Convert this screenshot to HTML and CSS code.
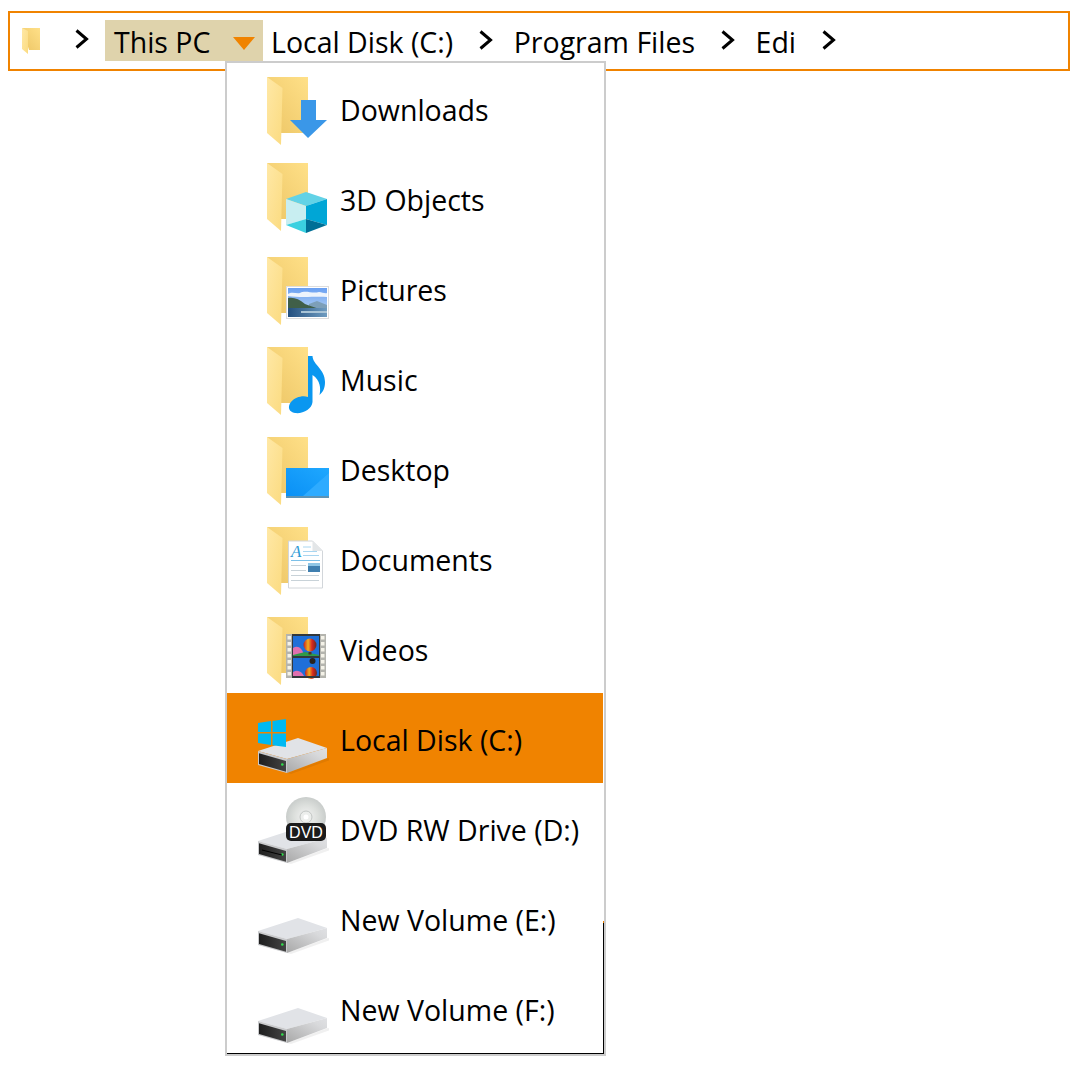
FILE: index.html
```html
<!DOCTYPE html>
<html lang="en">
<head>
  <meta charset="UTF-8">
  <meta name="viewport" content="width=device-width, initial-scale=1.0">
  <title>Address bar</title>
  <link rel="stylesheet" href="styles.css">
</head>
<body>
  <svg class="defs" width="0" height="0" aria-hidden="true">
    <defs>
      <linearGradient id="folderBack" x1="0" y1="1" x2="1" y2="0">
        <stop offset="0" stop-color="#ecc565"/>
        <stop offset="1" stop-color="#ffe088"/>
      </linearGradient>
      <linearGradient id="folderFlap" x1="0" y1="0" x2="1" y2="1">
        <stop offset="0" stop-color="#ffe8a6"/>
        <stop offset="1" stop-color="#fbdb80"/>
      </linearGradient>
      <linearGradient id="driveSide" x1="0" y1="1" x2="1" y2="0">
        <stop offset="0" stop-color="#a8a8a8"/>
        <stop offset="0.75" stop-color="#d8d9db"/>
        <stop offset="1" stop-color="#e0e1e4"/>
      </linearGradient>
      <linearGradient id="driveFace" x1="0" y1="0" x2="1" y2="0">
        <stop offset="0" stop-color="#1e1e1e"/>
        <stop offset="1" stop-color="#444444"/>
      </linearGradient>
      <linearGradient id="sky" x1="0" y1="0" x2="0" y2="1">
        <stop offset="0" stop-color="#6aa0f2"/>
        <stop offset="1" stop-color="#c4dcf2"/>
      </linearGradient>
      <linearGradient id="water" x1="0" y1="0" x2="1" y2="0">
        <stop offset="0" stop-color="#24507f"/>
        <stop offset="1" stop-color="#6f9cc0"/>
      </linearGradient>
      <linearGradient id="desk" x1="0" y1="1" x2="1" y2="0">
        <stop offset="0" stop-color="#0a90f5"/>
        <stop offset="1" stop-color="#1fa8ff"/>
      </linearGradient>
      <radialGradient id="disc">
        <stop offset="0" stop-color="#f4f4f4"/>
        <stop offset="0.6" stop-color="#dcdfdc"/>
        <stop offset="1" stop-color="#c9cdcb"/>
      </radialGradient>
      <linearGradient id="balloon" x1="0" y1="0" x2="1" y2="0">
        <stop offset="0" stop-color="#c81e1e"/>
        <stop offset="0.35" stop-color="#f0b020"/>
        <stop offset="0.65" stop-color="#d8281e"/>
        <stop offset="1" stop-color="#6a2a20"/>
      </linearGradient>

      <symbol id="folder" viewBox="0 0 72 72">
        <path d="M10 0H51V56H24Z" fill="url(#folderBack)"/>
        <path d="M10 0L25.5 11L24 68L10 56Z" fill="url(#folderFlap)"/>
      </symbol>

      <symbol id="folderSmall" viewBox="0 0 18 26">
        <path d="M0 0H18V22H7Z" fill="url(#folderBack)"/>
        <path d="M0 0L6 3L6 26L0 21Z" fill="url(#folderFlap)"/>
      </symbol>

      <symbol id="drive" viewBox="0 0 72 72">
        <path d="M30 66L71 51L76 52L34 67Z" fill="#000" opacity="0.06"/>
        <path d="M1 44L41 31L70 41L30 52Z" fill="#e1e3e7"/>
        <path d="M1 44L30 52V66L1 58Z" fill="#c9cacc"/>
        <path d="M30 52L70 41V51L30 66Z" fill="url(#driveSide)"/>
        <path d="M2 46.3L29 54V64.7L2 57Z" fill="url(#driveFace)"/>
        <circle cx="25.3" cy="57.5" r="1.3" fill="#2fe04a"/>
      </symbol>
    </defs>
  </svg>

  <nav class="address-bar">
    <svg class="root-folder" width="18" height="26"><use href="#folderSmall"/></svg>
    <svg class="chevron chevron-root" width="14" height="20" viewBox="0 0 14 20"><path d="M1.5 1.5L11.5 10L1.5 18.5" /></svg>
    <div class="crumb-active">
      <span class="crumb-label">This PC</span>
      <span class="triangle"></span>
    </div>
    <span class="crumb crumb-disk">Local Disk (C:)</span>
    <svg class="chevron" width="14" height="20" viewBox="0 0 14 20"><path d="M1.5 1.5L11.5 10L1.5 18.5" /></svg>
    <span class="crumb">Program Files</span>
    <svg class="chevron" width="14" height="20" viewBox="0 0 14 20"><path d="M1.5 1.5L11.5 10L1.5 18.5" /></svg>
    <span class="crumb">Edi</span>
    <svg class="chevron" width="14" height="20" viewBox="0 0 14 20"><path d="M1.5 1.5L11.5 10L1.5 18.5" /></svg>
  </nav>

  <ul class="menu">
    <li class="menu-item">
      <svg class="item-icon" viewBox="0 0 72 72">
        <use href="#folder"/>
        <path d="M44 23H59V43H70L51 61L33 43H44Z" fill="#3a97e8"/>
      </svg>
      <span>Downloads</span>
    </li>
    <li class="menu-item">
      <svg class="item-icon" viewBox="0 0 72 72">
        <use href="#folder" y="-4"/>
        <path d="M29 32L49 25L70 32L49 39Z" fill="#62d2e6"/>
        <path d="M29 32L49 39V52L29 58Z" fill="#c8eef1"/>
        <path d="M70 32L49 39V52L70 58Z" fill="#00a6d6"/>
        <path d="M29 58L49 52V66Z" fill="#3ad0e0"/>
        <path d="M70 58L49 52V66Z" fill="#006f96"/>
      </svg>
      <span>3D Objects</span>
    </li>
    <li class="menu-item">
      <svg class="item-icon" viewBox="0 0 72 72">
        <use href="#folder"/>
        <rect x="29.5" y="29.5" width="42" height="32" fill="#ffffff" stroke="#dddddd"/>
        <rect x="31" y="31" width="39" height="29" fill="url(#sky)"/>
        <path d="M31 37C35 34 39 37 43 36C49 33 55 37 62 35C65 35 68 37 70 36V40C60 39 45 41 31 39Z" fill="#eef4fc"/>
        <path d="M52 47L60 44L70 48V52H52Z" fill="#7d9fb8"/>
        <path d="M31 41C37 40 42 42 48 47C52 49 58 50 62 52H31Z" fill="#405f49"/>
        <rect x="31" y="51" width="39" height="9" fill="url(#water)"/>
        <rect x="44" y="54" width="26" height="2" fill="#a9c4d6"/>
      </svg>
      <span>Pictures</span>
    </li>
    <li class="menu-item">
      <svg class="item-icon" viewBox="0 0 72 72">
        <use href="#folder"/>
        <path d="M51 9H55.5C56 18 68 22 68 35C68 41 66 45 62.5 48C64 42 63.5 33 55.5 28V55C55 62 46 67 38 66C32 65 30 60 34 55C38 50 46 48 51 50Z" fill="#0a97f0"/>
      </svg>
      <span>Music</span>
    </li>
    <li class="menu-item">
      <svg class="item-icon" viewBox="0 0 72 72">
        <use href="#folder"/>
        <rect x="29" y="31" width="43" height="30" fill="#5d93b5"/>
        <rect x="29" y="31" width="43" height="28" fill="url(#desk)"/>
        <path d="M46 59L72 36V59Z" fill="#2eabff"/>
      </svg>
      <span>Desktop</span>
    </li>
    <li class="menu-item">
      <svg class="item-icon" viewBox="0 0 72 72">
        <use href="#folder"/>
        <path d="M31.5 14H55.5L65.5 24V61H31.5Z" fill="#ffffff" stroke="#d2d6da"/>
        <path d="M55.5 14V24H65.5Z" fill="#e3e6e8"/>
        <text class="doc-letter" x="34" y="30">A</text>
        <path d="M46 20H54M46 24.5H60M46 28.5H62" stroke="#a9d6f0" fill="none"/>
        <path d="M34 33.5H63" stroke="#7cc0e8" fill="none"/>
        <path d="M34 38.5H49M34 43.5H49M34 48.5H62M34 53.5H62" stroke="#c8d2d8" fill="none"/>
        <rect x="51" y="36" width="12" height="9" fill="#3f7fb0"/>
        <rect x="51" y="36" width="12" height="3" fill="#8fc6e6"/>
      </svg>
      <span>Documents</span>
    </li>
    <li class="menu-item">
      <svg class="item-icon" viewBox="0 0 72 72">
        <use href="#folder"/>
        <rect x="29" y="17" width="40" height="44" fill="#b4b4ae"/>
        <path d="M30.5 19h3.5v3.500h-3.500zM30.500 25h3.500v3.500h-3.500zM30.500 31h3.500v3.500h-3.500zM30.500 37h3.500v3.500h-3.500zM30.500 43h3.500v3.500h-3.500zM30.500 49h3.500v3.500h-3.500zM30.500 55h3.500v3.500h-3.500zM64 19h3.500v3.500h-3.500zM64 25h3.500v3.500h-3.500zM64 31h3.500v3.500h-3.500zM64 37h3.500v3.500h-3.500zM64 43h3.500v3.500h-3.500zM64 49h3.500v3.500h-3.500zM64 55h3.500v3.500h-3.500z" fill="#f4f2e8"/>
        <rect x="35" y="17" width="28" height="44" fill="#33383c"/>
        <rect x="36" y="19" width="26" height="20" fill="#1f6fd8"/>
        <rect x="36" y="41" width="26" height="18" fill="#1f6fd8"/>
        <path d="M36 38V31C41 28 45 31 47 38Z" fill="#e070b0"/>
        <path d="M36 38L48 35L62 38V39H36Z" fill="#2f9a48"/>
        <path d="M36 59V55C41 52 45 55 47 59Z" fill="#e070b0"/>
        <circle cx="53" cy="28" r="6.500" fill="url(#balloon)"/>
        <rect x="51.500" y="35" width="3" height="2.500" fill="#4a3020"/>
        <circle cx="55.500" cy="44" r="3" fill="#2a2420"/>
        <circle cx="54" cy="56" r="6" fill="url(#balloon)"/>
        <rect x="36" y="59" width="26" height="2" fill="#33383c"/>
      </svg>
      <span>Videos</span>
    </li>
    <li class="menu-item is-selected">
      <svg class="item-icon" viewBox="0 0 72 72">
        <use href="#drive"/>
        <path d="M1 16L14 14V25H1ZM15.500 14L29 12V25H15.500ZM1 26.500H14V38L1 36ZM15.500 26.500H29V40L15.500 38.200Z" fill="#00b9f2"/>
      </svg>
      <span>Local Disk (C:)</span>
    </li>
    <li class="menu-item">
      <svg class="item-icon" viewBox="0 0 72 72">
        <circle cx="49" cy="20" r="20" fill="url(#disc)"/>
        <circle cx="49" cy="20" r="6" fill="#eceeec" stroke="#c2c6c4"/>
        <circle cx="49" cy="20" r="2.500" fill="#ffffff"/>
        <use href="#drive"/>
        <path d="M5 53L25 58" stroke="#000000" fill="none"/>
        <rect x="29" y="26" width="40" height="18" rx="5" fill="#1b1b1b"/>
        <text class="dvd-label" x="49" y="41">DVD</text>
      </svg>
      <span>DVD RW Drive (D:)</span>
    </li>
    <li class="menu-item">
      <svg class="item-icon" viewBox="0 0 72 72"><use href="#drive"/></svg>
      <span>New Volume (E:)</span>
    </li>
    <li class="menu-item">
      <svg class="item-icon" viewBox="0 0 72 72"><use href="#drive"/></svg>
      <span>New Volume (F:)</span>
    </li>
  </ul>
</body>
</html>
```

FILE: styles.css
```css
body {
  margin: 11px 6px 0 8px;
  background: #fff;
  color: #000;
  font-family: "Open Sans", "Noto Sans", Arial, sans-serif;
  font-size: 28.5px;
}
.defs {
  position: absolute;
}
.address-bar {
  display: flex;
  align-items: flex-start;
  height: 60px;
  box-sizing: border-box;
  padding: 7px 0 0 12px;
  border: 2px solid #f08300;
}
.root-folder {
  margin-top: 8px;
}
.chevron {
  margin: 10px 21px 0 25.5px;
  fill: none;
  stroke: #000;
  stroke-width: 3;
}
.chevron-root {
  margin: 9px 16px 0 35px;
}
.crumb-active {
  display: flex;
  justify-content: space-between;
  width: 158px;
  height: 41px;
  box-sizing: border-box;
  padding: 0 8px 0 9px;
  background: #dfd3ac;
}
.crumb-label,
.crumb {
  line-height: 45px;
  white-space: nowrap;
}
.crumb-disk {
  margin-left: 8px;
}
.triangle {
  width: 0;
  height: 0;
  margin-top: 17px;
  border-top: 13px solid #f08300;
  border-left: 11px solid transparent;
  border-right: 11px solid transparent;
}
.menu {
  position: absolute;
  top: 61px;
  left: 225px;
  width: 377px;
  margin: 0;
  padding: 0 0 1px;
  list-style: none;
  background: #fff;
  border: 2px solid #ccc;
}
.menu::before {
  content: "";
  position: absolute;
  top: 858px;
  right: 0;
  width: 1px;
  height: 2px;
  background: #f08300;
}
.menu::after {
  content: "";
  position: absolute;
  top: 860px;
  right: 0;
  bottom: 0;
  left: 0;
  border-right: 1px solid #000;
  border-bottom: 1px solid #000;
}
.menu-item {
  display: flex;
  align-items: flex-start;
  gap: 11px;
  height: 90px;
  margin-right: 1px;
  box-sizing: border-box;
  padding: 14px 0 0 30px;
  line-height: 42px;
  white-space: nowrap;
}
.menu-item span {
  margin-top: 12px;
}
.menu-item.is-selected {
  background: #f08300;
}
.item-icon {
  flex: none;
  width: 72px;
  height: 72px;
  overflow: visible;
}
.doc-letter {
  fill: #2e9bd6;
  font-family: "Liberation Serif", serif;
  font-size: 17px;
  font-style: italic;
}
.dvd-label {
  fill: #fff;
  font-family: "Liberation Sans", Arial, sans-serif;
  font-size: 16px;
  text-anchor: middle;
}
```
